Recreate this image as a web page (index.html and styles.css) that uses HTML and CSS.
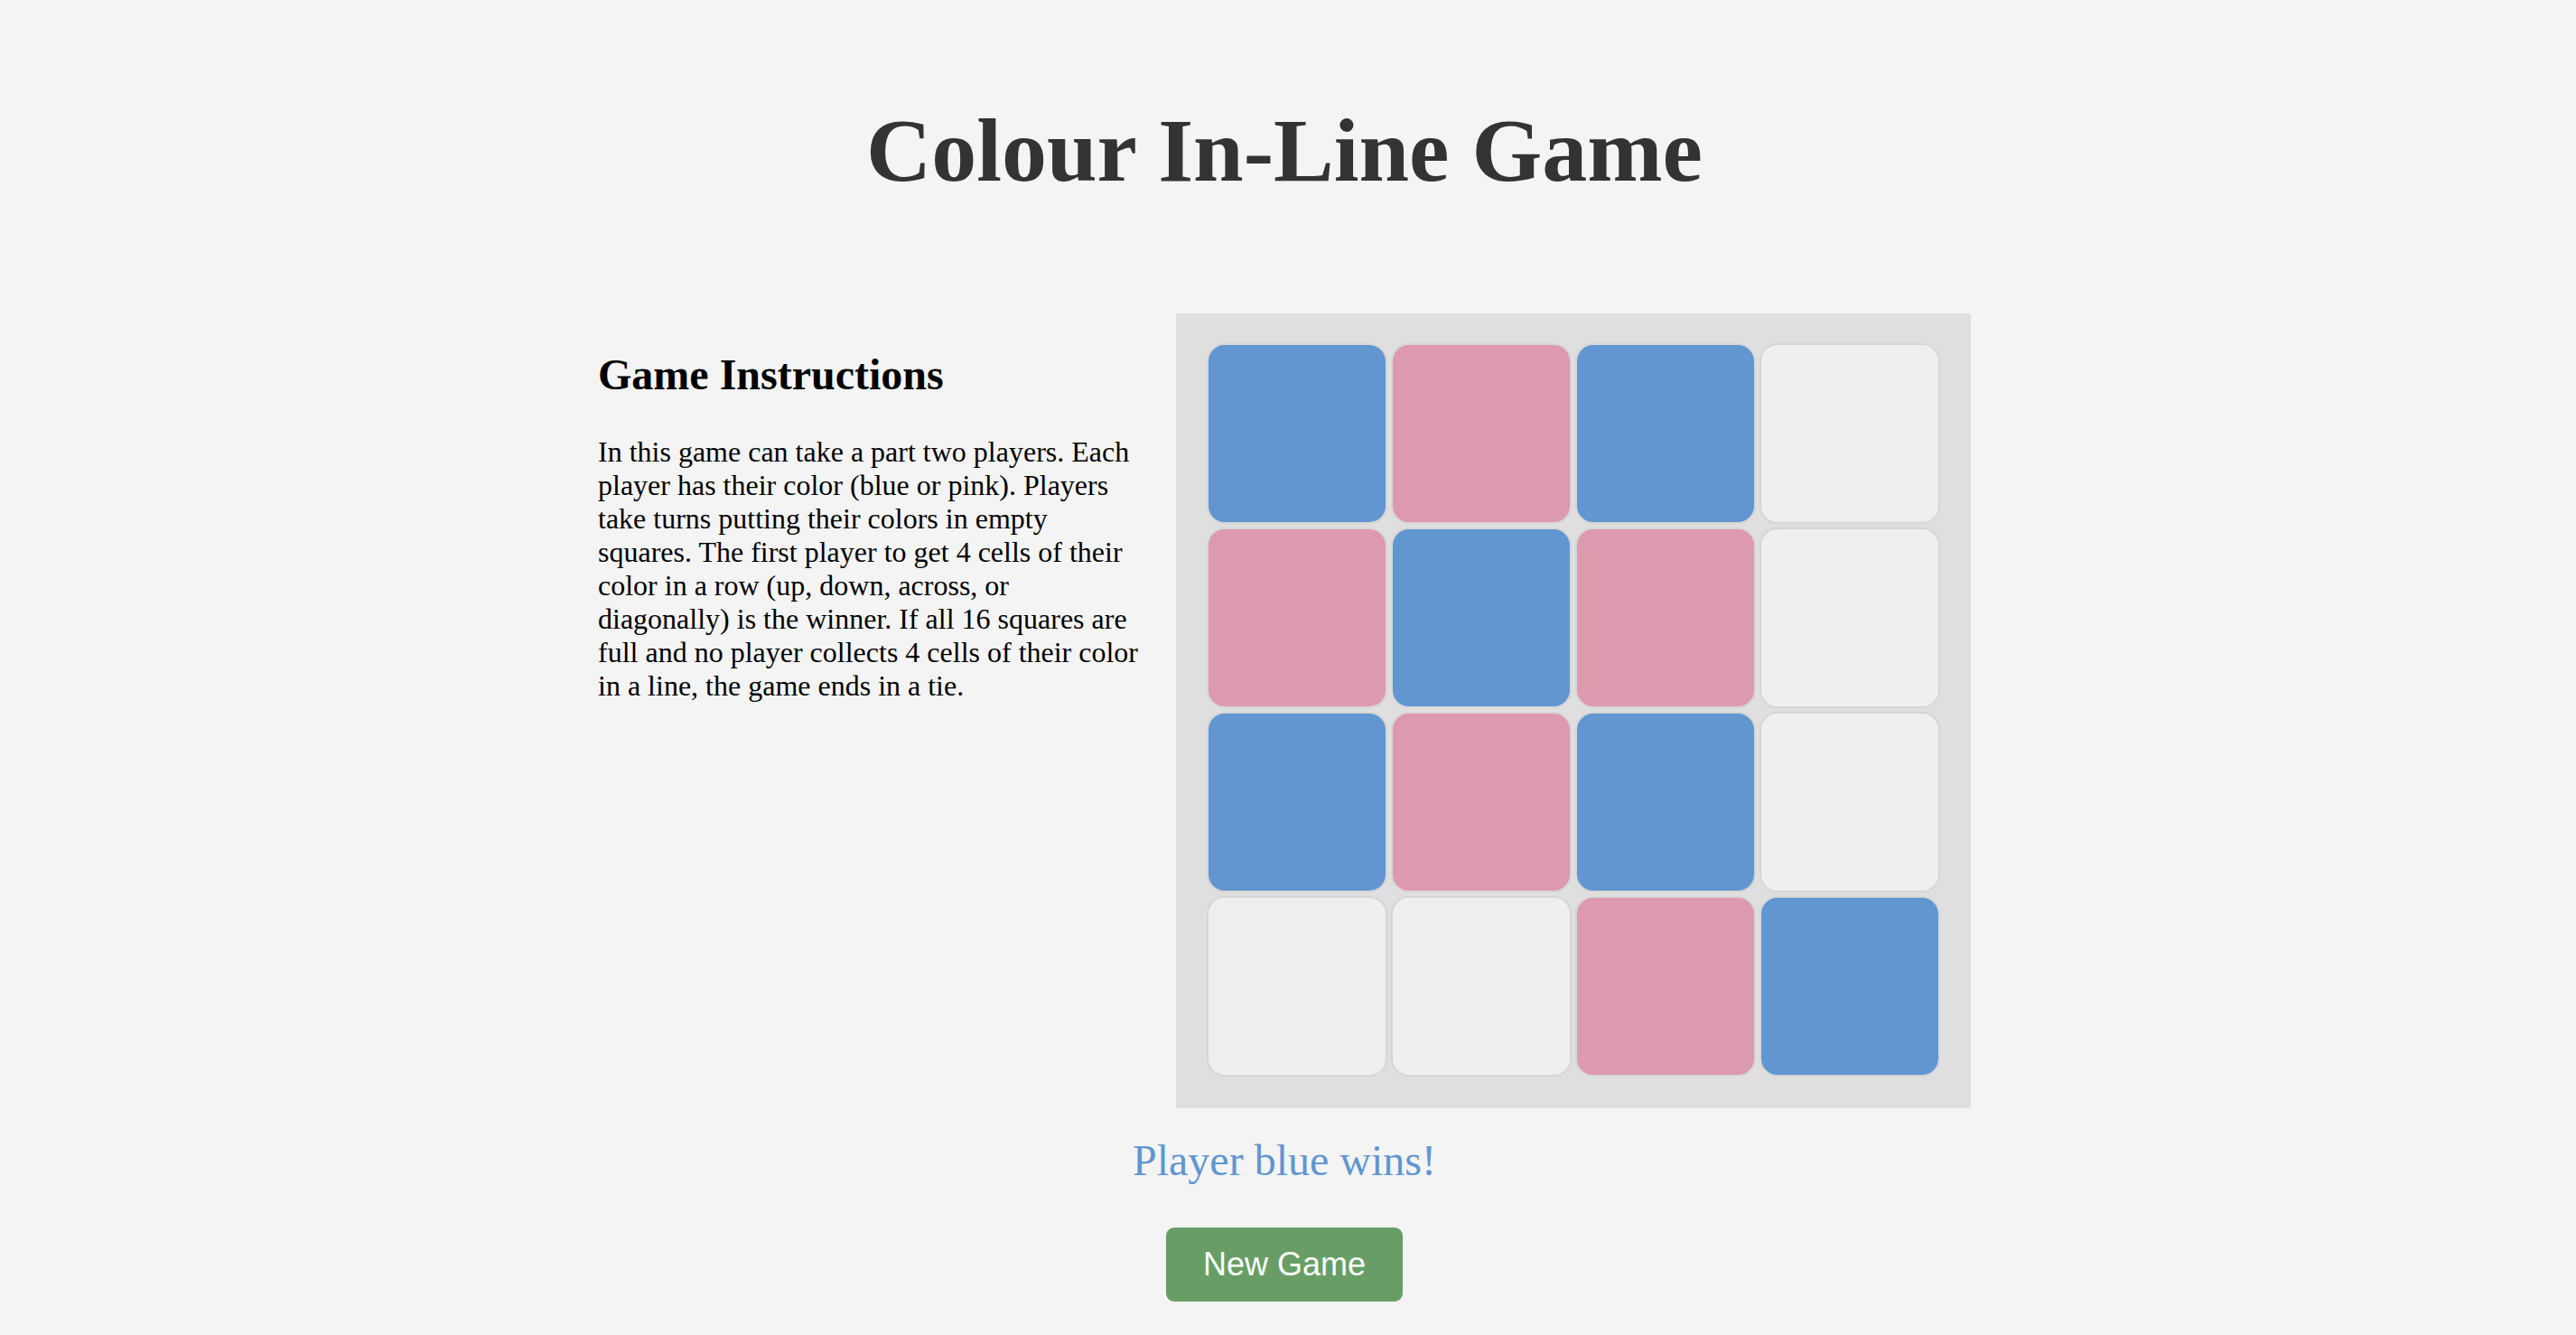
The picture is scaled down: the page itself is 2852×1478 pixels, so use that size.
FILE: index.html
```html
<!DOCTYPE html>
<html lang="en">
<head>
<meta charset="utf-8">
<title>Colour In-Line Game</title>
<link rel="stylesheet" href="styles.css">
</head>
<body>
<div class="page">
  <h1 class="title">Colour In-Line Game</h1>
  <main class="game">
    <section class="instructions">
      <h2 class="instructions-title">Game Instructions</h2>
      <p class="instructions-text">In this game can take a part two players. Each player has their color (blue or pink). Players take turns putting their colors in empty squares. The first player to get 4 cells of their color in a row (up, down, across, or diagonally) is the winner. If all 16 squares are full and no player collects 4 cells of their color in a line, the game ends in a tie.</p>
    </section>
    <div class="board">
      <div class="cell cell-blue"></div>
      <div class="cell cell-pink"></div>
      <div class="cell cell-blue"></div>
      <div class="cell"></div>
      <div class="cell cell-pink"></div>
      <div class="cell cell-blue"></div>
      <div class="cell cell-pink"></div>
      <div class="cell"></div>
      <div class="cell cell-blue"></div>
      <div class="cell cell-pink"></div>
      <div class="cell cell-blue"></div>
      <div class="cell"></div>
      <div class="cell"></div>
      <div class="cell"></div>
      <div class="cell cell-pink"></div>
      <div class="cell cell-blue"></div>
    </div>
  </main>
  <p class="status">Player blue wins!</p>
  <button class="new-game" type="button">New Game</button>
</div>
</body>
</html>
```
FILE: styles.css
```css
html, body {
  margin: 0;
  padding: 0;
  background: #f4f4f4;
}

body {
  font-family: "Liberation Serif", "Times New Roman", serif;
  color: #000;
}

.page {
  display: flex;
  flex-direction: column;
  align-items: center;
  padding-right: 8px;
  min-height: 1478px;
  box-sizing: border-box;
}

.title {
  margin: 109px 0 0;
  font-size: 100px;
  font-weight: bold;
  line-height: normal;
  color: #333333;
}

.game {
  display: flex;
  align-items: flex-start;
  gap: 40px;
  margin-top: 123px;
}

.instructions {
  width: 600px;
}

.instructions-title {
  margin: 40px 0 40px;
  font-size: 48px;
  font-weight: bold;
  line-height: normal;
}

.instructions-text {
  margin: 0;
  font-size: 32px;
  line-height: normal;
}

.board {
  display: grid;
  grid-template-columns: repeat(4, 200px);
  grid-auto-rows: 200px;
  gap: 4px;
  padding: 33px 34px 35px;
  background: #dfdfdf;
}

.cell {
  box-sizing: border-box;
  border: 2px solid #d6d6d6;
  border-radius: 20px;
  background: #efefef;
}

.cell-blue {
  background: #6196d1;
}

.cell-pink {
  background: #dd99ae;
}

.status {
  margin: 30px 0 0;
  font-size: 48px;
  line-height: normal;
  color: #6196d1;
}

.new-game {
  margin-top: 47px;
  padding: 20px 41px;
  font-family: "Liberation Sans", Arial, sans-serif;
  font-size: 36px;
  line-height: normal;
  color: #ffffff;
  background: #689e65;
  border: none;
  border-radius: 9px;
}
```
